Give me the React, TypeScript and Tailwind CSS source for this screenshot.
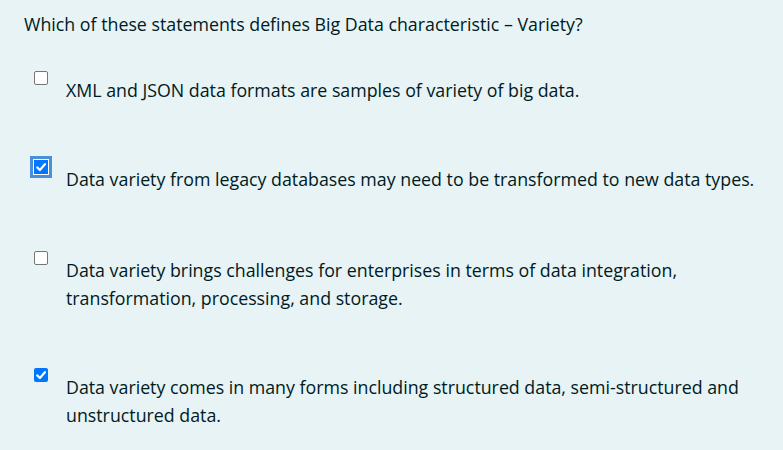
import React from "react";

type Option = {
  text: string;
  checked: boolean;
  focused?: boolean;
};

const options: Option[] = [
  {
    text: "XML and JSON data formats are samples of variety of big data.",
    checked: false,
  },
  {
    text: "Data variety from legacy databases may need to be transformed to new data types.",
    checked: true,
    focused: true,
  },
  {
    text: "Data variety brings challenges for enterprises in terms of data integration, transformation, processing, and storage.",
    checked: false,
  },
  {
    text: "Data variety comes in many forms including structured data, semi-structured and unstructured data.",
    checked: true,
  },
];

const Check = () => (
  <svg viewBox="0 0 14 14" className="h-[14px] w-[14px]">
    <path
      d="M3.2 7.4 L5.9 10 L10.9 4.2"
      fill="none"
      stroke="white"
      strokeWidth="2.2"
      strokeLinecap="round"
      strokeLinejoin="round"
    />
  </svg>
);

const Box = ({ checked, focused }: { checked: boolean; focused?: boolean }) => {
  if (focused) {
    return (
      <span className="flex h-[14px] w-[14px] shrink-0 items-center justify-center bg-[#0075ff] ring-[3px] ring-[#4b8fd8] ring-offset-[1px] ring-offset-white">
        <Check />
      </span>
    );
  }
  if (checked) {
    return (
      <span className="flex h-[14px] w-[14px] shrink-0 items-center justify-center rounded-[2px] bg-[#0075ff]">
        <Check />
      </span>
    );
  }
  return (
    <span className="h-[14px] w-[14px] shrink-0 rounded-[2px] border border-[#767676] bg-white" />
  );
};

export default function App() {
  return (
    <div className="h-[450px] w-full overflow-hidden bg-[#e7f3f5] font-['Open_Sans',sans-serif] text-[17.8px] text-[#001a1e]">
      <p className="pl-[24px] pt-[10px] leading-[28px]">
        Which of these statements defines Big Data characteristic – Variety?
      </p>
      <div className="mt-[33px] pl-[34px]">
        {options.map((o, i) => (
          <div key={i} className={`flex items-start ${i === 1 ? "pb-[2px]" : ""}`}>
            <Box checked={o.checked} focused={o.focused} />
            <span className="ml-[18px] max-w-[700px] pb-[56px] pt-[5px] leading-[28px]">
              {o.text}
            </span>
          </div>
        ))}
      </div>
    </div>
  );
}
